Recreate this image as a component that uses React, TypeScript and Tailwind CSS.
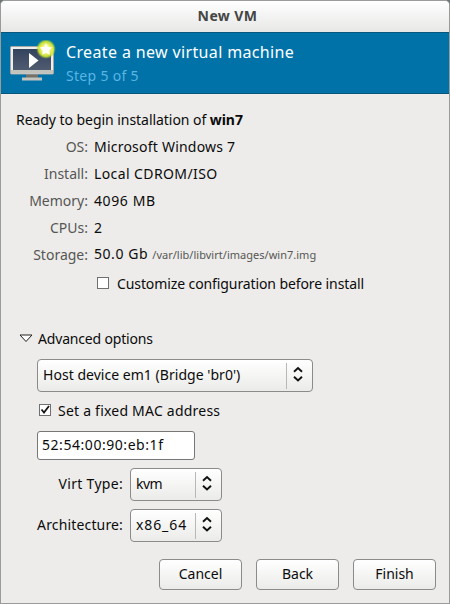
import type { ReactNode } from 'react';

function Chevrons() {
  return (
    <svg width="12" height="16" viewBox="0 0 12 16" fill="none" stroke="#111" strokeWidth="1.9" className="-mt-[3px]">
      <path d="M2 5.8 6 2l4 3.8M2 10.7l4 3.8 4-3.8" />
    </svg>
  );
}

function Combo({ className, children }: { className: string; children: ReactNode }) {
  return (
    <div className={`flex h-[33px] items-center rounded-[4px] border border-[#8b8b89] bg-linear-to-b from-white to-[#ebebe9] pl-[5px] ${className}`}>
      <span className="flex-1 pb-px">{children}</span>
      <span className="flex h-[26px] w-[26px] items-center border-l border-[#b8b8b6] pl-[5px]">
        <Chevrons />
      </span>
    </div>
  );
}

function Row({ label, children }: { label: string; children: ReactNode }) {
  return (
    <div className="flex h-[27px] items-center">
      <span className="w-[87px] text-right text-[#565654]">{label}</span>
      <span className="ml-[6px]">{children}</span>
    </div>
  );
}

function Button({ children }: { children: ReactNode }) {
  return (
    <button className="flex h-[31px] w-[83px] items-center justify-center rounded-[4px] border border-[#8b8b89] bg-linear-to-b from-white to-[#ebebe9] pb-px">
      {children}
    </button>
  );
}

function MachineIcon() {
  return (
    <svg width="48" height="44" viewBox="0 0 48 44" className="shrink-0">
      <defs>
        <radialGradient id="glow">
          <stop offset="0.4" stopColor="#f5f97c" />
          <stop offset="0.75" stopColor="#d3e62c" stopOpacity="0.9" />
          <stop offset="1" stopColor="#8cc43c" stopOpacity="0" />
        </radialGradient>
        <linearGradient id="screen" x2="0" y2="1">
          <stop stopColor="#34445e" />
          <stop offset="1" stopColor="#505b70" />
        </linearGradient>
      </defs>
      <path d="M17 34h12v5H17z" fill="#73716c" />
      <path d="M13 37.5h20v3H13z" fill="#c4c3be" />
      <rect x="1.5" y="6.5" width="43" height="27.5" rx="1" fill="#eeeeec" stroke="#a5a6a3" />
      <path d="M2 30h42v3.5H2z" fill="#c3c3be" />
      <rect x="4" y="9" width="38" height="21" fill="url(#screen)" />
      <path d="M20 13v15l9.5-7.5z" fill="white" />
      <circle cx="37" cy="9" r="10" fill="url(#glow)" />
      <path d="m37 3 1.9 3.9 4.3.6-3.1 3 .7 4.3-3.8-2-3.8 2 .7-4.3-3.1-3 4.3-.6z" fill="white" />
    </svg>
  );
}

export default function App() {
  return (
    <div className="h-[604px] w-[450px] bg-[#6f7776]">
      <div className="flex h-full flex-col overflow-hidden rounded-t-[5px] border border-[#9b9b99] bg-[#edecea] font-['Noto_Sans',sans-serif] text-[14px] leading-[20px] whitespace-nowrap text-[#0b0b0b]">
        <div className="flex h-[31px] items-center justify-center bg-linear-to-b from-white to-[#e7e7e6] pb-px pl-[5px] text-[14px] font-bold tracking-[0.4px] text-[#454545]">
          New VM
        </div>
        <div className="flex h-[62px] border-y border-[#07567d] bg-[#0072a8] pt-[7px] pl-[8px] text-white">
          <MachineIcon />
          <div className="ml-[9px]">
            <div className="text-[16px] leading-[24px] tracking-[0.36px]">Create a new virtual machine</div>
            <div className="text-[14px] leading-[24px] tracking-[0.3px] text-[#5ab5e4]">Step 5 of 5</div>
          </div>
        </div>

        <div className="mt-[12px] flex h-[27px] items-center pl-[15px]">
          <span className="tracking-[-0.05px]">Ready to begin installation of <b>win7</b></span>
        </div>
        <Row label="OS:"><span className="tracking-[0.22px]">Microsoft Windows 7</span></Row>
        <Row label="Install:"><span className="tracking-[0.4px]">Local CDROM/ISO</span></Row>
        <Row label="Memory:"><span className="tracking-[0.6px]">4096 MB</span></Row>
        <Row label="CPUs:">2</Row>
        <Row label="Storage:">
          <span className="tracking-[0.55px]">50.0 Gb </span>
          <span className="text-[11px] tracking-[0.02px] text-[#565654]">/var/lib/libvirt/images/win7.img</span>
        </Row>
        <div className="mt-[2px] flex h-[27px] items-center pl-[96px]">
          <span className="-mt-[2px] h-[12px] w-[12px] border border-[#707070] bg-white" />
          <span className="ml-[8px] tracking-[-0.1px]">Customize configuration before install</span>
        </div>

        <div className="mt-[30px] flex h-[24px] items-center pl-[18px]">
          <svg width="14" height="9" viewBox="0 0 14 9" fill="white" stroke="#222" className="-mt-[2px]">
            <path d="M1 1h12L7 7.5z" />
          </svg>
          <span className="ml-[5px] tracking-[-0.18px]">Advanced options</span>
        </div>
        <div className="mt-[8px] pl-[36px]">
          <Combo className="w-[276px]"><span className="tracking-[0.03px]">Host device em1 (Bridge 'br0')</span></Combo>
          <div className="mt-[6px] flex h-[26px] items-center pl-[2px]">
            <svg width="12" height="12" viewBox="0 0 12 12" fill="none" className="-mt-[2px]">
              <rect x=".5" y=".5" width="11" height="11" fill="white" stroke="#707070" />
              <path d="m2.5 5.5 2.5 3 5-6.5" stroke="#151515" strokeWidth="1.8" />
            </svg>
            <span className="ml-[7px] tracking-[0.22px]">Set a fixed MAC address</span>
          </div>
          <div className="mt-[7px] flex h-[29px] w-[158px] items-center rounded-[3px] border border-[#777] bg-white pb-px pl-[4px] tracking-[0.55px]">
            52:54:00:90:eb:1f
          </div>
        </div>
        <div className="mt-[8px] flex flex-col gap-[8px]">
          <div className="flex items-center">
            <span className="w-[122px] pb-px text-right tracking-[0.3px]">Virt Type:</span>
            <Combo className="ml-[7px] w-[92px]"><span className="tracking-[-0.6px]">kvm</span></Combo>
          </div>
          <div className="flex items-center">
            <span className="w-[122px] pb-px text-right tracking-[0.15px]">Architecture:</span>
            <Combo className="ml-[7px] w-[92px]"><span className="tracking-[0.9px]">x86_64</span></Combo>
          </div>
        </div>
        <div className="mt-[17px] flex justify-end gap-[14px] pr-[13px]">
          <Button>Cancel</Button>
          <Button>Back</Button>
          <Button>Finish</Button>
        </div>
      </div>
    </div>
  );
}
